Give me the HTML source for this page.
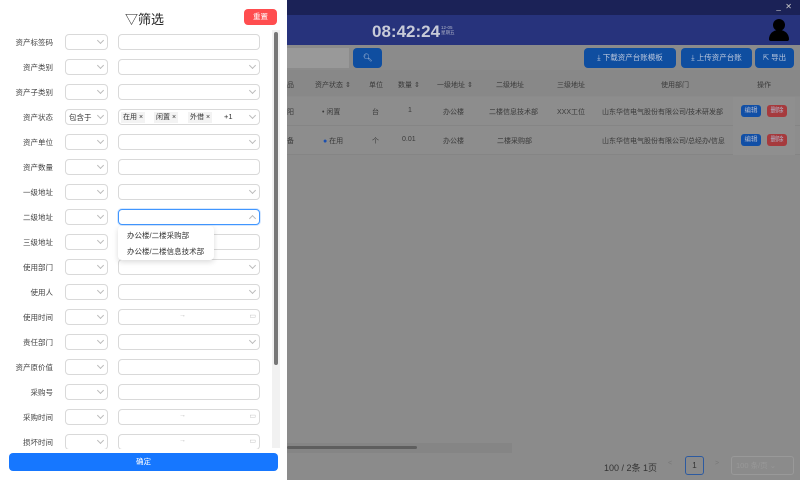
<!DOCTYPE html>
<html><head><meta charset="utf-8"><style>
*{box-sizing:border-box;margin:0;padding:0}
body{width:800px;height:480px;overflow:hidden;position:relative;font-family:"Liberation Sans","Noto Sans CJK SC",sans-serif;background:#8b8b8b;font-size:8px;color:#333}
.abs{position:absolute}
.top{left:0;top:0;width:800px;height:15px;background:#1b2257}
.hdr{left:0;top:15px;width:800px;height:30px;background:#27337c}
.btn{position:absolute;top:48px;height:20px;border-radius:4px;background:#0f4ea0;color:#b9c6dc;font-size:7.5px;line-height:20px;text-align:center}
.th{top:70px;height:26px;background:#888;width:513px;left:287px}
.row{left:287px;width:513px;height:29px;background:#8d8d8d;border-bottom:1px solid #858585}
.c{position:absolute;font-size:7px;color:#3a3a3a;white-space:nowrap}
.drawer{left:0;top:0;width:287px;height:480px;background:#fff}
.lbl{position:absolute;left:0;width:53px;text-align:right;font-size:7.5px;color:#444;white-space:nowrap}
.s1{position:absolute;left:65px;width:43px;height:16px;border:1px solid #d9d9d9;border-radius:4px;background:#fff}
.s2{position:absolute;left:118px;width:142px;height:16px;border:1px solid #d9d9d9;border-radius:4px;background:#fff}
.chev{position:absolute;right:4px;top:3px;width:5px;height:5px;border-right:1px solid #bbb;border-bottom:1px solid #bbb;transform:rotate(45deg)}
.tag{position:absolute;top:2px;height:11px;background:#f3f3f3;font-size:7px;line-height:11px;padding:0 2px;color:#333}
.ed{position:absolute;width:20px;height:12px;border-radius:3px;font-size:6.5px;line-height:12px;text-align:center;color:#b0b8cc}
</style></head><body>
<div class="abs top"></div>
<div class="abs" style="right:8px;top:2px;color:#ccc;font-size:8px">_ &nbsp;✕</div>
<div class="abs hdr"></div>
<div class="abs" style="left:372px;top:22px;color:#c8cbd8;font-size:17px;font-weight:bold">08:42:24</div>
<div class="abs" style="left:441px;top:25px;color:#b0b5c8;font-size:4.5px;line-height:5px">12-05<br>星期五</div>
<div class="abs" style="left:773px;top:19px;width:12px;height:12px;border-radius:50%;background:#000"></div>
<div class="abs" style="left:769px;top:30px;width:20px;height:11px;border-radius:10px 10px 2px 2px;background:#000"></div>
<div class="abs" style="left:287px;top:48px;width:62px;height:20px;background:#999"></div>
<div class="btn" style="left:353px;width:29px;">🔍︎</div>
<div class="btn" style="left:584px;width:92px">⤓ 下载资产台账模板</div>
<div class="btn" style="left:681px;width:71px">⤓ 上传资产台账</div>
<div class="btn" style="left:755px;width:39px">⇱ 导出</div>
<div class="abs th"></div>
<div class="c" style="left:287px;top:80px">品</div>
<div class="c" style="left:315px;top:80px">资产状态 ⇕</div>
<div class="c" style="left:369px;top:80px">单位</div>
<div class="c" style="left:398px;top:80px">数量 ⇕</div>
<div class="c" style="left:437px;top:80px">一级地址 ⇕</div>
<div class="c" style="left:496px;top:80px">二级地址</div>
<div class="c" style="left:557px;top:80px">三级地址</div>
<div class="c" style="left:661px;top:80px">使用部门</div>
<div class="c" style="left:757px;top:80px">操作</div>
<div class="abs row" style="top:97px"></div>
<div class="abs row" style="top:126px"></div>
<div class="c" style="left:287px;top:107px">阳</div>
<div class="c" style="left:322px;top:107px">• 闲置</div>
<div class="c" style="left:372px;top:107px">台</div>
<div class="c" style="left:408px;top:107px">1</div>
<div class="c" style="left:443px;top:107px">办公楼</div>
<div class="c" style="left:489px;top:107px">二楼信息技术部</div>
<div class="c" style="left:557px;top:107px">XXX工位</div>
<div class="c" style="left:602px;top:107px">山东华信电气股份有限公司/技术研发部</div>
<div class="c" style="left:287px;top:136px">备</div>
<div class="c" style="left:323px;top:136px"><span style="color:#1a4fb0">●</span> 在用</div>
<div class="c" style="left:372px;top:136px">个</div>
<div class="c" style="left:402px;top:136px">0.01</div>
<div class="c" style="left:443px;top:136px">办公楼</div>
<div class="c" style="left:497px;top:136px">二楼采购部</div>
<div class="c" style="left:602px;top:136px">山东华信电气股份有限公司/总经办/信息</div>
<div class="abs" style="left:733px;top:97px;width:62px;height:58px;background:#8f8f8f"></div>
<div class="ed" style="left:741px;top:105px;background:#114fa6">编辑</div>
<div class="ed" style="left:767px;top:105px;background:#a63a3d">删除</div>
<div class="ed" style="left:741px;top:134px;background:#114fa6">编辑</div>
<div class="ed" style="left:767px;top:134px;background:#a63a3d">删除</div>
<div class="abs" style="left:287px;top:443px;width:225px;height:10px;background:#858585"></div>
<div class="abs" style="left:287px;top:446px;width:130px;height:3px;border-radius:2px;background:#5e5e5e"></div>
<div class="c" style="left:604px;top:461px;font-size:9px;color:#333">100 / 2条 1页</div>
<div class="c" style="left:668px;top:460px;color:#777">&lt;</div>
<div class="abs" style="left:685px;top:456px;width:19px;height:19px;border:1px solid #2c5aa0;border-radius:3px;font-size:8px;text-align:center;line-height:17px;color:#333">1</div>
<div class="c" style="left:715px;top:460px;color:#777">&gt;</div>
<div class="abs" style="left:731px;top:456px;width:63px;height:19px;border:1px solid #999;border-radius:3px;font-size:7.5px;line-height:17px;padding-left:4px;color:#999">100 条/页 ⌄</div>

<div class="abs drawer"></div>
<div class="abs" style="left:125px;top:9px;font-size:13px;color:#222">▽筛选</div>
<div class="abs" style="left:244px;top:9px;width:33px;height:16px;border-radius:4px;background:#ff4d4f;color:#fff;font-size:7.5px;line-height:16px;text-align:center">重置</div>
<div class="abs" style="left:272px;top:30px;width:8px;height:418px;background:#f1f1f1"></div>
<div class="abs" style="left:274px;top:32px;width:4px;height:333px;border-radius:2px;background:#777"></div>

<div class="lbl" style="top:37px">资产标签码</div><div class="s1" style="top:34px"><i class="chev"></i></div><div class="s2" style="top:34px"></div>
<div class="lbl" style="top:62px">资产类别</div><div class="s1" style="top:59px"><i class="chev"></i></div><div class="s2" style="top:59px"><i class="chev"></i></div>
<div class="lbl" style="top:87px">资产子类别</div><div class="s1" style="top:84px"><i class="chev"></i></div><div class="s2" style="top:84px"><i class="chev"></i></div>
<div class="lbl" style="top:112px">资产状态</div><div class="s1" style="top:109px"><span style="position:absolute;left:3px;top:2px;font-size:7.5px">包含于</span><i class="chev"></i></div>
<div class="s2" style="top:109px"><span class="tag" style="left:2px">在用 ×</span><span class="tag" style="left:35px">闲置 ×</span><span class="tag" style="left:69px">外借 ×</span><span style="position:absolute;left:105px;top:2px;font-size:7.5px">+1</span><i class="chev"></i></div>
<div class="lbl" style="top:137px">资产单位</div><div class="s1" style="top:134px"><i class="chev"></i></div><div class="s2" style="top:134px"><i class="chev"></i></div>
<div class="lbl" style="top:162px">资产数量</div><div class="s1" style="top:159px"><i class="chev"></i></div><div class="s2" style="top:159px"></div>
<div class="lbl" style="top:187px">一级地址</div><div class="s1" style="top:184px"><i class="chev"></i></div><div class="s2" style="top:184px"><i class="chev"></i></div>
<div class="lbl" style="top:212px">二级地址</div><div class="s1" style="top:209px"><i class="chev"></i></div><div class="s2" style="top:209px;border-color:#4096ff;box-shadow:0 0 0 1px #d6e8ff"><i class="chev" style="transform:rotate(225deg);top:6px"></i></div>
<div class="lbl" style="top:237px">三级地址</div><div class="s1" style="top:234px"><i class="chev"></i></div><div class="s2" style="top:234px"></div>
<div class="lbl" style="top:262px">使用部门</div><div class="s1" style="top:259px"><i class="chev"></i></div><div class="s2" style="top:259px"><i class="chev"></i></div>
<div class="lbl" style="top:287px">使用人</div><div class="s1" style="top:284px"><i class="chev"></i></div><div class="s2" style="top:284px"><i class="chev"></i></div>
<div class="lbl" style="top:312px">使用时间</div><div class="s1" style="top:309px"><i class="chev"></i></div><div class="s2" style="top:309px"><span style="position:absolute;left:60px;top:2px;color:#bbb;font-size:7px">→</span><span style="position:absolute;right:3px;top:2px;color:#bbb;font-size:7px">▭</span></div>
<div class="lbl" style="top:337px">责任部门</div><div class="s1" style="top:334px"><i class="chev"></i></div><div class="s2" style="top:334px"><i class="chev"></i></div>
<div class="lbl" style="top:362px">资产原价值</div><div class="s1" style="top:359px"><i class="chev"></i></div><div class="s2" style="top:359px"></div>
<div class="lbl" style="top:387px">采购号</div><div class="s1" style="top:384px"><i class="chev"></i></div><div class="s2" style="top:384px"></div>
<div class="lbl" style="top:412px">采购时间</div><div class="s1" style="top:409px"><i class="chev"></i></div><div class="s2" style="top:409px"><span style="position:absolute;left:60px;top:2px;color:#bbb;font-size:7px">→</span><span style="position:absolute;right:3px;top:2px;color:#bbb;font-size:7px">▭</span></div>
<div class="lbl" style="top:437px">损坏时间</div><div class="s1" style="top:434px"><i class="chev"></i></div><div class="s2" style="top:434px"><span style="position:absolute;left:60px;top:2px;color:#bbb;font-size:7px">→</span><span style="position:absolute;right:3px;top:2px;color:#bbb;font-size:7px">▭</span></div>
<div class="abs" style="left:0;top:449px;width:287px;height:31px;background:#fff"></div>
<div class="abs" style="left:9px;top:453px;width:269px;height:18px;border-radius:4px;background:#1677ff;color:#fff;font-size:7.5px;text-align:center;line-height:18px">确定</div>

<div class="abs" style="left:118px;top:226px;width:96px;height:34px;background:#fff;border-radius:4px;box-shadow:0 2px 6px rgba(0,0,0,.15)"></div>
<div class="abs" style="left:127px;top:230px;font-size:7.5px;color:#333">办公楼/二楼采购部</div>
<div class="abs" style="left:127px;top:246px;font-size:7.5px;color:#333">办公楼/二楼信息技术部</div>
</body></html>
